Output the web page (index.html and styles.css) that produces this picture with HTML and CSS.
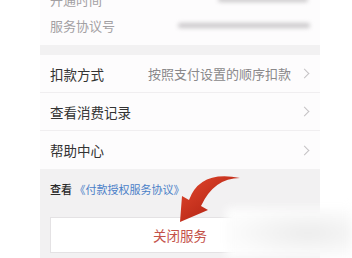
FILE: index.html
```html
<!DOCTYPE html>
<html>
<head>
<meta charset="utf-8">
<link rel="stylesheet" href="styles.css">
</head>
<body>
<div class="page">
  <div class="screen">
    <div class="info">
      <div class="info-row first"><span class="info-label">开通时间</span><span class="blur-val v1"></span></div>
      <div class="info-row"><span class="info-label">服务协议号</span><span class="blur-val v2"></span></div>
    </div>
    <div class="gap"></div>
    <div class="list">
      <div class="row"><span class="row-label">扣款方式</span><span class="row-value">按照支付设置的顺序扣款</span><span class="chev"></span></div>
      <div class="row"><span class="row-label">查看消费记录</span><span class="row-value"></span><span class="chev"></span></div>
      <div class="row last"><span class="row-label">帮助中心</span><span class="row-value"></span><span class="chev"></span></div>
    </div>
    <div class="footer">
      <div class="agree">查看 <span class="link">《付款授权服务协议》</span></div>
      <div class="close-btn">关闭服务</div>
    </div>
  </div>
  <svg class="arrow" width="80" height="62" viewBox="0 0 80 62">
    <defs>
      <linearGradient id="ag" x1="0" y1="0" x2="1" y2="1">
        <stop offset="0" stop-color="#e4492e"/>
        <stop offset="1" stop-color="#a3170b"/>
      </linearGradient>
    </defs>
    <path d="M10 54 L12 28 L19 32 Q30 2 70 10 Q44 10 31 38 L38 42 Z" fill="url(#ag)"/>
  </svg>
  <div class="watermark"></div>
</div>
</body>
</html>
```

FILE: styles.css
```css
html, body {
  margin: 0;
  padding: 0;
  background: #ffffff;
  font-family: "Noto Sans CJK SC", "Noto Sans", sans-serif;
}
.page {
  position: relative;
  width: 352px;
  height: 258px;
  overflow: hidden;
  background: #ffffff;
}
.screen {
  margin-left: 40px;
  width: 280px;
  height: 258px;
  background: #f2f1f2;
  display: flex;
  flex-direction: column;
}
.info {
  background: #fdfcfd;
  margin-top: -14px;
  padding-bottom: 7px;
}
.info-row {
  height: 26px;
  display: flex;
  align-items: center;
  padding: 0 10px;
  justify-content: space-between;
}
.info-label {
  font-size: 13px;
  color: #a3a0a3;
}
.blur-val {
  display: block;
  height: 5px;
  background: #cac8ca;
  filter: blur(2px);
  border-radius: 3px;
}
.v1 { width: 90px; margin-right: 2px; }
.v2 { width: 132px; margin-right: 0; }
.gap {
  height: 10px;
  background: #f2f1f2;
}
.list {
  background: #fdfcfd;
}
.row {
  height: 38px;
  box-sizing: border-box;
  display: flex;
  align-items: center;
  padding: 0 10px;
  border-bottom: 1px solid #f0eef0;
}
.row.last { border-bottom: none; }
.row-label {
  font-size: 13.5px;
  color: #333;
  flex: 1;
}
.row-value {
  font-size: 13px;
  color: #8a888a;
  margin-right: 10px;
}
.chev {
  width: 6px;
  height: 6px;
  border-top: 1px solid #c4c2c4;
  border-right: 1px solid #c4c2c4;
  transform: rotate(45deg);
  margin-right: 2px;
}
.footer {
  flex: 1;
  padding: 11px 10px 0;
}
.agree {
  font-size: 11px;
  color: #2a2a2a;
  font-weight: 500;
  height: 18px;
  line-height: 18px;
}
.link {
  color: #4a80c8;
  font-weight: 400;
}
.close-btn {
  margin-top: 19px;
  height: 36px;
  background: #ffffff;
  border: 1px solid #e4e2e4;
  box-sizing: border-box;
  display: flex;
  align-items: center;
  justify-content: center;
  font-size: 13.5px;
  color: #c4524a;
}
.arrow {
  position: absolute;
  left: 170px;
  top: 168px;
}
.watermark {
  position: absolute;
  left: 226px;
  top: 208px;
  width: 126px;
  height: 50px;
  background: radial-gradient(ellipse at 65% 50%, #ececec 0%, #f4f4f4 35%, #fbfbfb 65%, #ffffff 100%);
  filter: blur(4px);
}
```
